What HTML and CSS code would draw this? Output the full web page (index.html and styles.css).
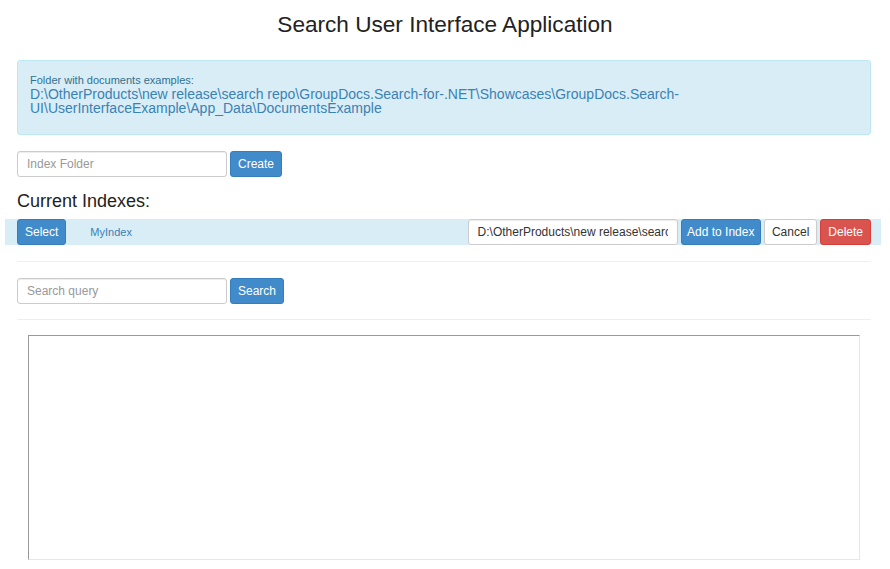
FILE: index.html
```html
<!DOCTYPE html>
<html>
<head>
<meta charset="utf-8">
<link rel="stylesheet" href="styles.css">
</head>
<body>
<h1 class="title">Search User Interface Application</h1>
<div class="container">
  <div class="alert">
    <div class="alert-label">Folder with documents examples:</div>
    <div class="alert-path">D:\OtherProducts\new release\search repo\GroupDocs.Search-for-.NET\Showcases\GroupDocs.Search-UI\UserInterfaceExample\App_Data\DocumentsExample</div>
  </div>
  <div class="form-row">
    <input class="input" type="text" placeholder="Index Folder">
    <button class="btn btn-primary">Create</button>
  </div>
  <h3 class="subtitle">Current Indexes:</h3>
  <div class="index-row">
    <div class="index-left">
      <button class="btn btn-primary">Select</button>
      <span class="index-name">MyIndex</span>
    </div>
    <div class="index-right">
      <input class="input input-path" type="text" value="D:\OtherProducts\new release\search repo\GroupDocs.Search-for-.NET">
      <button class="btn btn-primary btn-narrow">Add to Index</button>
      <button class="btn btn-default">Cancel</button>
      <button class="btn btn-danger">Delete</button>
    </div>
  </div>
  <hr class="sep first">
  <div class="form-row">
    <input class="input" type="text" placeholder="Search query">
    <button class="btn btn-primary">Search</button>
  </div>
  <hr class="sep second">
  <div class="frame"></div>
</div>
</body>
</html>
```
FILE: styles.css
```css
* { box-sizing: border-box; }
html, body { margin: 0; padding: 0; background: #fff; }
body {
  font-family: "Liberation Sans", Arial, sans-serif;
  font-size: 14px;
  color: #333;
  overflow: hidden;
}
.title {
  margin: 0;
  padding-top: 11px;
  height: 60px;
  text-align: center;
  font-size: 22.6px;
  font-weight: normal;
  line-height: 28px;
  color: #222;
}
.container {
  padding: 0 19px 0 17px;
}
.alert {
  background: #d9edf7;
  border: 1px solid #bce8f1;
  border-radius: 3px;
  color: #31708f;
  padding: 13px 12px 0 12px;
  height: 75px;
}
.alert-label {
  font-size: 11px;
  line-height: 13px;
}
.alert-path {
  font-size: 14px;
  line-height: 14px;
  color: #3a82b4;
}
.form-row {
  display: flex;
  align-items: center;
  gap: 3px;
  margin-top: 16px;
}
.input {
  width: 210px;
  height: 26px;
  border: 1px solid #ccc;
  border-radius: 3px;
  padding: 2px 9px;
  font-family: "Liberation Sans", Arial, sans-serif;
  font-size: 12px;
  color: #555;
  background: #fff;
  box-shadow: inset 0 1px 1px rgba(0,0,0,.075);
}
.input::placeholder { color: #999; }
.btn {
  height: 26px;
  border: 1px solid transparent;
  border-radius: 3px;
  padding: 3px 7px;
  font-family: "Liberation Sans", Arial, sans-serif;
  font-size: 12px;
  line-height: 18px;
  cursor: pointer;
}
.btn-narrow { padding: 3px 5.5px; }
.btn-primary { background: #428bca; border-color: #357ebd; color: #fff; }
.btn-default { background: #fff; border-color: #ccc; color: #333; }
.btn-danger { background: #d9534f; border-color: #d43f3a; color: #fff; }
.subtitle {
  margin: 14px 0 0 0;
  font-size: 18px;
  font-weight: normal;
  line-height: 20px;
  height: 28px;
  color: #222;
}
.index-row {
  display: flex;
  justify-content: space-between;
  align-items: center;
  background: #d9edf7;
  height: 26px;
  margin: 0 -10px 0 -12px;
  padding: 0 10px 0 12px;
}
.index-left {
  display: flex;
  align-items: center;
}
.index-name {
  margin-left: 24px;
  font-size: 11px;
  color: #3a7fb5;
}
.index-right {
  display: flex;
  align-items: center;
  gap: 3px;
}
.input-path {
  color: #333;
  padding: 2px 9px;
}
.sep {
  border: 0;
  border-top: 1px solid #eee;
  margin: 16px 0 0 0;
}
.sep.second { margin-top: 15px; }
.frame {
  margin: 15px 11px 0 11px;
  height: 225px;
  border-style: solid;
  border-width: 1px;
  border-color: #999 #e6e6e6 #e6e6e6 #999;
}
```
